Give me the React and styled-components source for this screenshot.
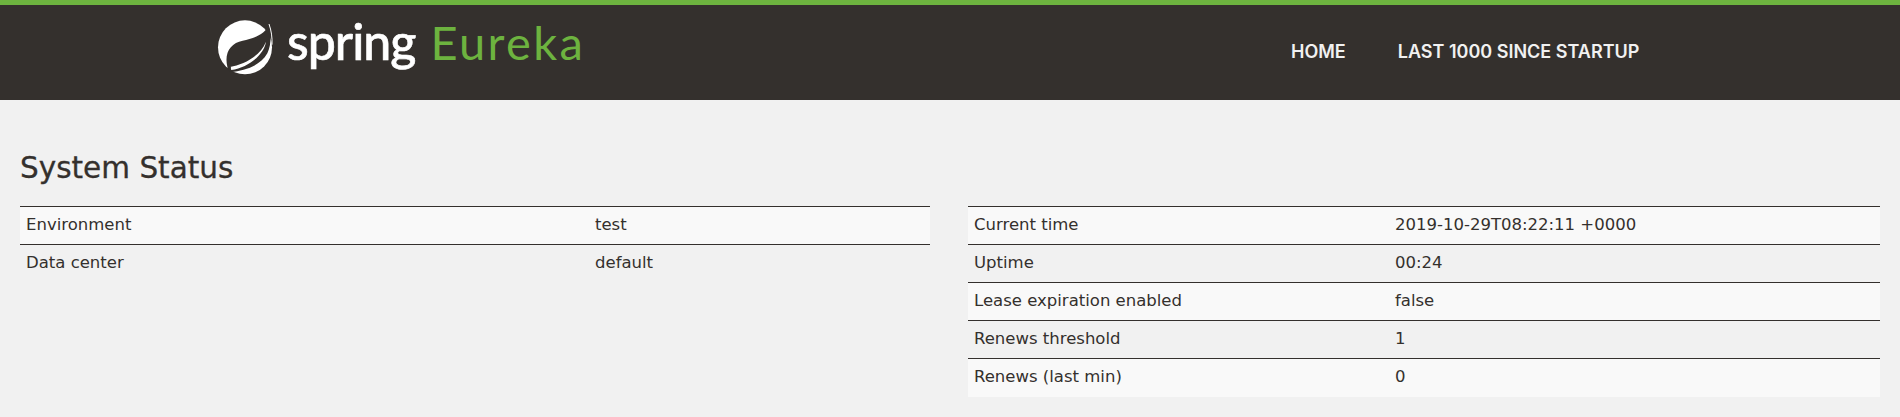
import styled, { createGlobalStyle } from 'styled-components';

const GlobalStyle = createGlobalStyle`
	html, body {
		margin: 0;
		padding: 0;
		background: #f1f1f1;
	}
	body {
		font-family: 'DejaVu Sans', 'Noto Sans', sans-serif;
		color: #34302d;
	}
`;

const leftRows = [
	['Environment', 'test'],
	['Data center', 'default'],
];

const rightRows = [
	['Current time', '2019-10-29T08:22:11 +0000'],
	['Uptime', '00:24'],
	['Lease expiration enabled', 'false'],
	['Renews threshold', '1'],
	['Renews (last min)', '0'],
];

const SpringLeaf = () => (
	<LeafIcon viewBox="0 0 270 225" aria-hidden="true">
		<circle cx="105" cy="112" r="81" fill="#fff" />
		<path
			d="M178 42 C165 75 130 85 98 92 C62 99 42 128 52 170 C54 178 58 184 64 186 C100 182 150 170 172 130 C184 105 184 70 178 42 Z"
			fill="#34302d"
		/>
		<path d="M177 42 C184 62 187 82 186 104" fill="none" stroke="#fff" strokeWidth="3" />
		<path d="M60 171 C100 164 150 140 168 95 C162 135 115 172 64 180 Z" fill="#fff" />
		<circle cx="58" cy="173" r="5" fill="#34302d" />
	</LeafIcon>
);

const StatusTable = ({ rows, labelWidth }) => (
	<Table>
		<colgroup>
			<col style={{ width: labelWidth }} />
			<col />
		</colgroup>
		<tbody>
			{rows.map(([label, value]) => (
				<Row key={label}>
					<Cell>{label}</Cell>
					<Cell>{value}</Cell>
				</Row>
			))}
		</tbody>
	</Table>
);

const App = () => {
	return (
		<>
			<GlobalStyle />
			<Header>
				<Brand>
					<SpringLeaf />
					<SpringWord>spring</SpringWord>
					<EurekaWord>Eureka</EurekaWord>
				</Brand>
				<Nav>
					<NavLink href="#">HOME</NavLink>
					<NavLink href="#">LAST 1000 SINCE STARTUP</NavLink>
				</Nav>
			</Header>
			<Main>
				<Title>System Status</Title>
				<Columns>
					<StatusTable rows={leftRows} labelWidth="569px" />
					<StatusTable rows={rightRows} labelWidth="421px" />
				</Columns>
			</Main>
		</>
	);
};

const Header = styled.header`
	box-sizing: border-box;
	height: 100px;
	background: #34302d;
	border-top: 5px solid #6db33f;
	display: flex;
	align-items: flex-start;
	padding-left: 210px;
`;

const Brand = styled.div`
	display: flex;
	align-items: baseline;
	width: 1081px;
	height: 75px;
	margin-top: 5px;
`;

const LeafIcon = styled.svg`
	width: 90px;
	height: 75px;
	flex: none;
	align-self: flex-start;
	margin-right: -13px;
`;

const SpringWord = styled.span`
	font-family: 'Lato', sans-serif;
	font-size: 50px;
	font-weight: 500;
	line-height: 62px;
	color: #fff;
	letter-spacing: -1px;
	-webkit-text-stroke: 0.6px #fff;
`;

const EurekaWord = styled.span`
	font-family: 'Lato', sans-serif;
	font-size: 47px;
	line-height: 62px;
	color: #6db33f;
	margin-left: 15px;
	letter-spacing: 2.4px;
`;

const Nav = styled.nav`
	display: flex;
	gap: 52px;
	padding-top: 37px;
`;

const NavLink = styled.a`
	font-family: 'Inter', sans-serif;
	font-size: 18px;
	font-weight: 600;
	line-height: 20px;
	color: #f1f1f1;
	text-decoration: none;
`;

const Main = styled.main`
	padding: 50px 20px 0;
`;

const Title = styled.h1`
	margin: 0;
	font-family: 'DejaVu Sans', sans-serif;
	font-size: 29.5px;
	font-weight: 400;
	line-height: 36px;
	color: #34302d;
	-webkit-text-stroke: 0.3px #34302d;
`;

const Columns = styled.div`
	display: grid;
	grid-template-columns: 910px 912px;
	gap: 38px;
	margin-top: 20px;
	align-items: start;
`;

const Table = styled.table`
	width: 100%;
	border-collapse: collapse;
	table-layout: fixed;
`;

const Row = styled.tr`
	height: 38px;
	border-top: 1px solid #34302d;

	&:nth-child(odd) {
		background: #f9f9f9;
	}
`;

const Cell = styled.td`
	padding: 0 6px 3px;
	font-size: 16.5px;
	color: #34302d;
`;

export default App;
